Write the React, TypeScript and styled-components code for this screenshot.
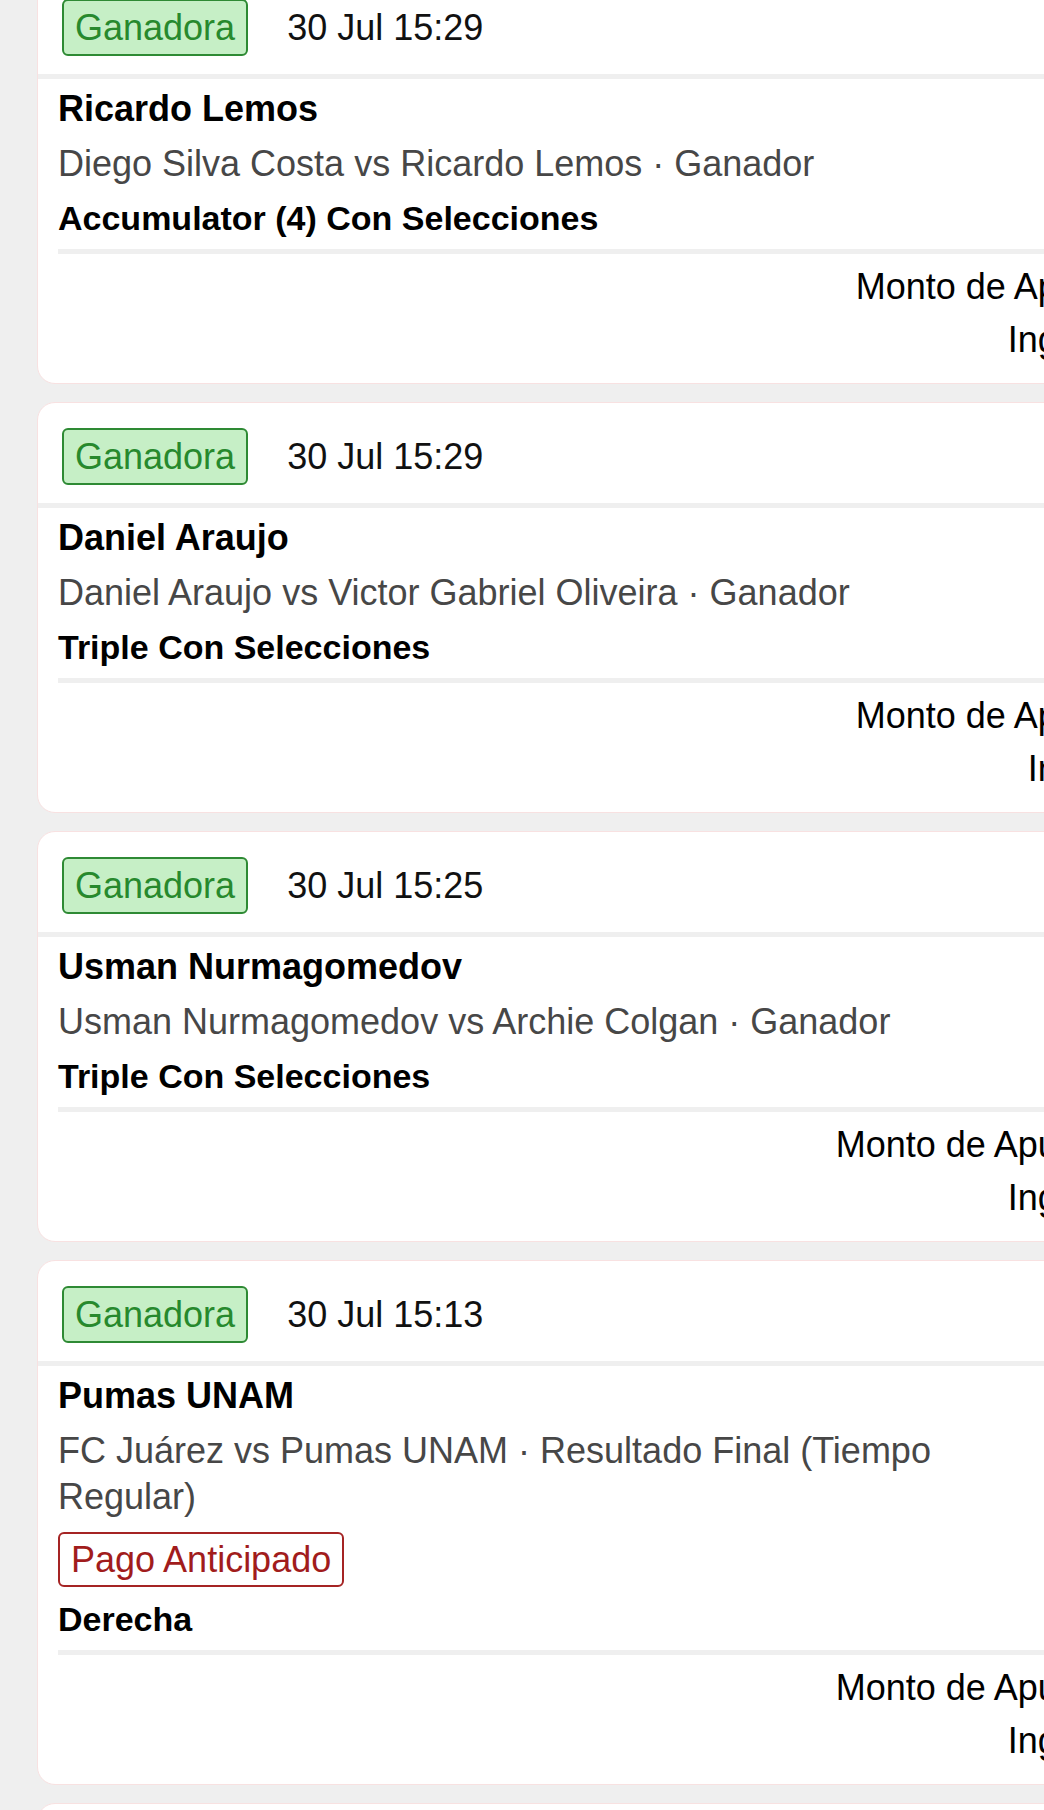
import React from "react";
import styled, { createGlobalStyle, css } from "styled-components";

const GlobalStyle = createGlobalStyle`
  html, body {
    margin: 0;
    padding: 0;
    background: #efefef;
    font-family: "Liberation Sans", Arial, sans-serif;
    color: #000;
  }
`;

const Viewport = styled.div`
  height: 100vh;
  overflow: hidden;
`;

const BetList = styled.div`
  display: flex;
  flex-direction: column;
  gap: 18px;
  margin-top: -27px;
  padding-left: 37px;
  width: 1264px;
`;

const Card = styled.div`
  background: #fff;
  border: 1.5px solid #f8e1e1;
  border-radius: 18px;
  overflow: hidden;
`;

const CardHeader = styled.div`
  display: flex;
  align-items: center;
  gap: 39px;
  padding: 25px 24px 18px;
  border-bottom: 5px solid #efefef;
`;

const Badge = styled.span<{ $tone: "win" | "cashout" }>`
  display: inline-block;
  font-size: 36px;
  line-height: 41px;
  border: 2px solid;
  border-radius: 6px;
  ${(p) =>
    p.$tone === "win"
      ? css`
          padding: 6px 11px;
          background: #c6efc6;
          border-color: #2e8a34;
          color: #27892d;
        `
      : css`
          padding: 5px 11px;
          margin: 4px 0 0;
          background: #fff;
          border-color: #a52424;
          color: #a11c1c;
          align-self: flex-start;
        `}
`;

const DateText = styled.span`
  font-size: 36px;
  line-height: 41px;
  color: #111;
`;

const CardBody = styled.div`
  display: flex;
  justify-content: space-between;
  margin: 0 24px 0 20px;
  padding: 7px 0 8px;
  border-bottom: 5px solid #efefef;
`;

const Info = styled.div`
  display: flex;
  flex-direction: column;
  gap: 8.5px;
  max-width: 900px;
`;

const Selection = styled.div`
  font-size: 36px;
  line-height: 46px;
  font-weight: 700;
`;

const EventLine = styled.div`
  font-size: 36px;
  line-height: 46px;
  color: #474747;
`;

const BetType = styled.div`
  font-size: 34px;
  line-height: 46px;
  font-weight: 700;
`;

const Odds = styled.div`
  font-size: 36px;
  line-height: 46px;
  font-weight: 700;
`;

const CardFooter = styled.div`
  display: flex;
  flex-direction: column;
  align-items: flex-end;
  gap: 7px;
  padding: 10px 24px 20px;
`;

const FooterRow = styled.div`
  font-size: 36px;
  line-height: 46px;
  text-align: right;
`;

type Bet = {
  date: string;
  selection: string;
  event: string;
  earlyPayout?: boolean;
  betType: string;
  odds: string;
  stake: string;
  returns: string;
};

const bets: Bet[] = [
  {
    date: "30 Jul 15:29",
    selection: "Ricardo Lemos",
    event: "Diego Silva Costa vs Ricardo Lemos · Ganador",
    betType: "Accumulator (4) Con Selecciones",
    odds: "8.42",
    stake: "$10.00",
    returns: "$84.20",
  },
  {
    date: "30 Jul 15:29",
    selection: "Daniel Araujo",
    event: "Daniel Araujo vs Victor Gabriel Oliveira · Ganador",
    betType: "Triple Con Selecciones",
    odds: "0.99",
    stake: "$10.00",
    returns: "$9.90",
  },
  {
    date: "30 Jul 15:25",
    selection: "Usman Nurmagomedov",
    event: "Usman Nurmagomedov vs Archie Colgan · Ganador",
    betType: "Triple Con Selecciones",
    odds: "0.48",
    stake: "$100.00",
    returns: "$48.00",
  },
  {
    date: "30 Jul 15:13",
    selection: "Pumas UNAM",
    event: "FC Juárez vs Pumas UNAM · Resultado Final (Tiempo Regular)",
    earlyPayout: true,
    betType: "Derecha",
    odds: "0.52",
    stake: "$100.00",
    returns: "$52.00",
  },
  {
    date: "30 Jul 15:02",
    selection: "Cruz Azul",
    event: "Cruz Azul vs Toluca · Resultado Final (Tiempo Regular)",
    betType: "Derecha",
    odds: "1.85",
    stake: "$10.00",
    returns: "$18.50",
  },
];

const BetCard = ({ bet }: { bet: Bet }) => (
  <Card>
    <CardHeader>
      <Badge $tone="win">Ganadora</Badge>
      <DateText>{bet.date}</DateText>
    </CardHeader>
    <CardBody>
      <Info>
        <Selection>{bet.selection}</Selection>
        <EventLine>{bet.event}</EventLine>
        {bet.earlyPayout && <Badge $tone="cashout">Pago Anticipado</Badge>}
        <BetType>{bet.betType}</BetType>
      </Info>
      <Odds>{bet.odds}</Odds>
    </CardBody>
    <CardFooter>
      <FooterRow>Monto de Apuesta: {bet.stake}</FooterRow>
      <FooterRow>Ingresos: {bet.returns}</FooterRow>
    </CardFooter>
  </Card>
);

const App = () => {
  return (
    <Viewport>
      <GlobalStyle />
      <BetList>
        {bets.map((bet, i) => (
          <BetCard key={i} bet={bet} />
        ))}
      </BetList>
    </Viewport>
  );
};

export default App;
